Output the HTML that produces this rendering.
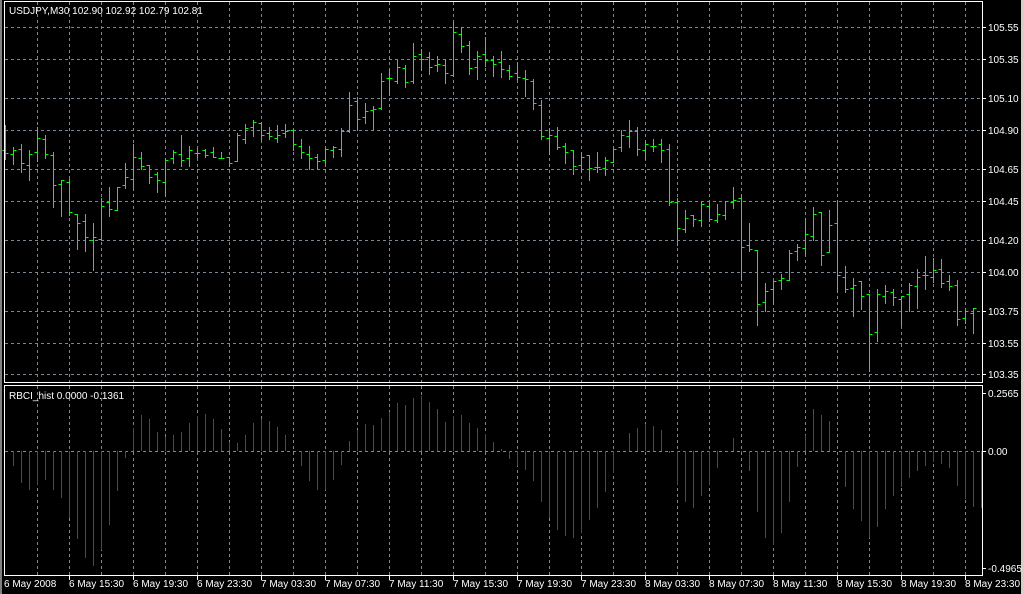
<!DOCTYPE html>
<html><head><meta charset="utf-8"><style>
html,body{margin:0;padding:0;background:#000;width:1024px;height:594px;overflow:hidden}
svg{display:block}
text{font-family:"Liberation Sans",sans-serif;font-size:10px;fill:#fff}
</style></head><body>
<svg id="s" width="1024" height="594" xmlns="http://www.w3.org/2000/svg">
<rect width="1024" height="594" fill="#000"/>
<rect x="0" y="0" width="2" height="594" fill="#808080"/>
<rect x="1021" y="0" width="3" height="594" fill="#d4d0c8"/>
<g id="grid" stroke="#778899" stroke-width="1" stroke-dasharray="3,3" shape-rendering="crispEdges"></g>
<g id="bars" stroke="#00ff00" stroke-width="1" shape-rendering="crispEdges"></g>
<g id="hist" stroke-width="1" shape-rendering="crispEdges"></g>
<g fill="none" stroke="#fff" stroke-width="1" shape-rendering="crispEdges">
<rect x="4.5" y="1.5" width="978" height="381"/>
<rect x="4.5" y="385.5" width="978" height="190"/>
</g>
<text x="9" y="14">USDJPY,M30  102.90 102.92 102.79 102.81</text>
<text x="9" y="399">RBCI_hist 0.0000 -0.1361</text>
<g id="lab"></g>
</svg>
<script>
var NS="http://www.w3.org/2000/svg";
function el(p,t,a,txt){var e=document.createElementNS(NS,t);for(var k in a)e.setAttribute(k,a[k]);if(txt)e.textContent=txt;document.getElementById(p).appendChild(e);}
// vertical grid
for(var x=37;x<982;x+=32){el('grid','line',{x1:x+.5,y1:2,x2:x+.5,y2:382});el('grid','line',{x1:x+.5,y1:386,x2:x+.5,y2:575});}
var ph=[[27,"105.55"],[59,"105.35"],[98,"105.10"],[130,"104.90"],[169,"104.65"],[201,"104.45"],[240,"104.20"],[272,"104.00"],[311,"103.75"],[343,"103.55"],[374,"103.35"]];
ph.forEach(function(p){el('grid','line',{x1:5,y1:p[0]+.5,x2:982,y2:p[0]+.5});el('lab','line',{x1:983,y1:p[0]+.5,x2:986,y2:p[0]+.5,stroke:'#fff'});el('lab','text',{x:988,y:p[0]+4},p[1]);});
el('grid','line',{x1:5,y1:451.5,x2:982,y2:451.5});
[[393,"0.2565"],[451,"0.00"],[568,"-0.4965"]].forEach(function(p){el('lab','line',{x1:983,y1:p[0]+.5,x2:986,y2:p[0]+.5,stroke:'#fff'});el('lab','text',{x:988,y:p[0]+4},p[1]);});
var tl=["6 May 15:30","6 May 19:30","6 May 23:30","7 May 03:30","7 May 07:30","7 May 11:30","7 May 15:30","7 May 19:30","7 May 23:30","8 May 03:30","8 May 07:30","8 May 11:30","8 May 15:30","8 May 19:30","8 May 23:30"];
el('lab','text',{x:4,y:587},"6 May 2008");
tl.forEach(function(t,i){var x=69+64*i;el('lab','line',{x1:x+.5,y1:576,x2:x+.5,y2:580,stroke:'#fff'});el('lab','text',{x:x,y:587},t);});
// price bars x,h,l,o,c
var B=[[5,125,159,150,153],[13,147,164,154,150],[21,144,172,149,163],[29,150,180,165,154],[37,127,161,152,138],[45,135,158,139,154],[53,152,207,155,185],[61,180,216,184,180],[69,179,215,182,212],[77,214,249,214,223],[85,214,251,221,237],[93,223,270,240,237],[101,198,240,239,206],[109,187,216,202,209],[117,187,210,210,187],[125,163,188,185,177],[133,144,189,179,157],[141,152,169,158,166],[149,165,183,165,177],[157,172,192,174,180],[165,158,196,182,160],[173,150,163,158,152],[181,135,166,154,160],[189,146,166,158,150],[197,148,157,153,153],
[205,149,157,150,155],[213,147,157,152,157],[221,152,158,158,158],[229,157,166,157,163],[237,133,161,161,135],[245,124,143,139,128],[253,120,136,127,122],[261,122,140,123,135],[269,127,139,133,136],[277,125,142,138,135],[285,124,137,133,131],[293,129,150,130,144],[301,139,158,146,152],[309,146,169,154,158],[317,154,169,157,161],[325,148,165,160,149],[333,146,157,150,147],[341,128,156,149,131],[349,92,132,131,105],[357,97,129,101,119],[365,103,123,117,111],[373,106,130,110,109],[381,73,109,108,81],[389,69,95,78,78],
[397,60,83,81,67],[405,65,87,68,82],[413,43,83,81,56],[421,49,70,54,59],[429,52,74,57,67],[437,56,71,65,64],[445,59,83,65,73],[453,22,76,75,32],[461,27,52,34,46],[469,41,74,45,68],[477,51,79,67,56],[485,37,66,54,60],[493,56,76,60,64],[501,51,77,62,69],[509,65,79,70,76],[517,62,79,73,77],[525,70,96,78,79],[533,79,109,81,103],[541,100,139,105,136],[549,128,154,138,135],[557,127,149,136,147],[565,143,163,146,152],[573,150,174,150,166],[581,152,172,165,157],
[589,155,180,155,168],[597,152,172,167,167],[605,157,175,168,160],[613,147,162,162,149],[621,130,151,147,135],[629,120,147,136,131],[637,127,155,131,149],[645,140,159,150,144],[653,139,151,146,146],[661,139,162,144,150],[669,144,205,149,202],[677,198,245,202,228],[685,210,232,229,218],[693,215,226,215,219],[701,201,226,220,204],[709,201,221,206,219],[717,204,222,220,214],[725,201,219,215,201],[733,187,208,202,200],[741,195,280,198,247],[749,223,251,245,249],[757,250,325,250,304],[765,283,311,302,291],[773,281,304,289,281],[781,274,289,280,278],
[789,250,280,280,253],[797,244,260,251,247],[805,218,256,248,234],[813,207,240,236,214],[821,212,265,212,255],[829,210,252,252,225],[837,201,292,223,275],[845,266,292,277,289],[853,278,316,288,285],[861,281,309,281,296],[869,294,371,294,334],[877,289,341,332,294],[885,285,303,296,291],[893,289,305,292,297],[901,296,325,299,296],[909,283,311,294,285],[917,269,308,286,277],[925,256,289,275,275],[933,258,282,277,270],[941,259,287,269,283],[949,275,290,281,286],[957,280,325,285,319],[965,308,323,318,311],[973,308,333,313,308]];
B.forEach(function(b){var x=b[0]+.5;el('bars','line',{x1:x,y1:b[1],x2:x,y2:b[2]+1});el('bars','line',{x1:x-3,y1:b[3]+.5,x2:x,y2:b[3]+.5});el('bars','line',{x1:x,y1:b[4]+.5,x2:x+3,y2:b[4]+.5});});
// histogram
var H="466r483r490r485g480g490r498r518r539r558r566r550g525g491g458g428g415g419r432r437r435g432g423g416g414g419r429r442r443r435g423g419g421r427r435r451g466r481r490r490g480g465g441g430g424g425r418g412g403g405r398g396g402r409r422r416g415g423r428r434r442r449r459r466r470r481r502r518r530r536r538r533g520g508g492g473g451g433g428g424g426r430r453r485r502r508r496g485g468g451g438g452r471r512r538r545r533g502g467g435g409g415r421r451r487r509r521r538r527g509g496g487g478g471g466g462g464r468r486r499r507r508r";
var m=H.match(/\d+[rg]/g);
m.forEach(function(s,i){var y=parseInt(s),c=s.slice(-1)=='r'?'#ff0000':'#008000';var x=13+8*i+.5;if(y!=451)el('hist','line',{x1:x,y1:451,x2:x,y2:y,stroke:c});});
</script>
</body></html>
